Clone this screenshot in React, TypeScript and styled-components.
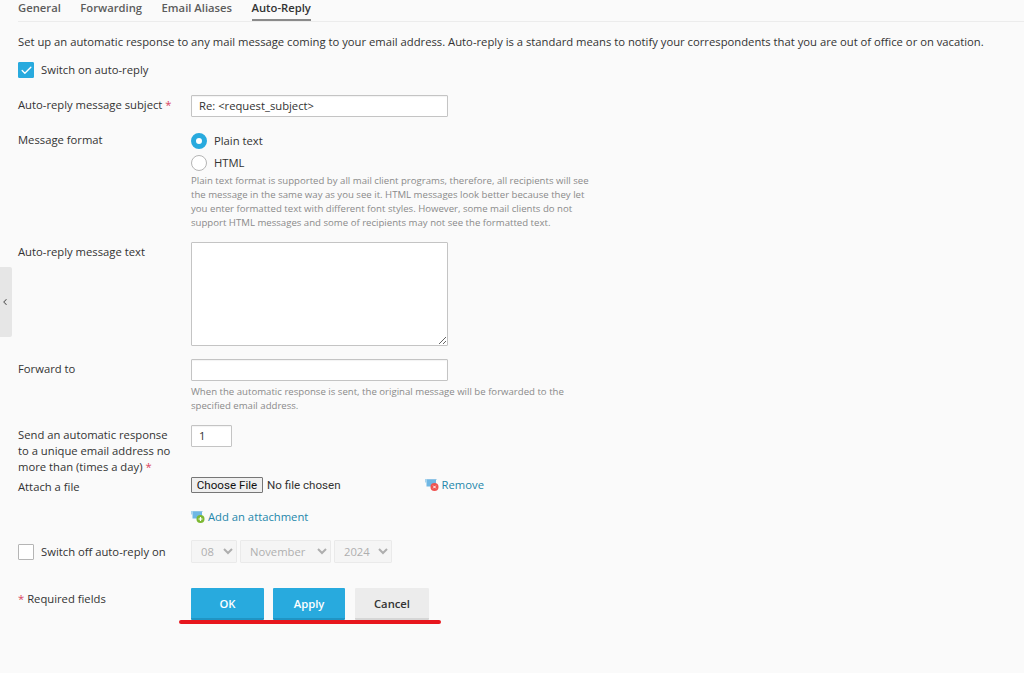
import styled, { createGlobalStyle } from 'styled-components';
import { Check, ChevronLeft } from 'lucide-react';

const GlobalStyle = createGlobalStyle`
  html, body {
    margin: 0;
    padding: 0;
    background: #fafafa;
  }
  body {
    font-family: "Open Sans", "Liberation Sans", sans-serif;
    font-size: 11.25px;
    color: #333;
  }
`

const Page = styled.div`
  position: relative;
  height: 673px;
  overflow: hidden;
  padding: 0 0 0 18px;
  box-sizing: border-box;
`
const Tabs = styled.div`
  display: flex;
  gap: 19.5px;
  height: 21px;
  border-bottom: 1px solid #ececec;
  box-sizing: content-box;
`
const Tab = styled.div<{ $active?: boolean }>`
  height: 21px;
  margin-bottom: -1px;
  line-height: 16px;
  font-weight: 600;
  color: ${p => (p.$active ? '#333' : '#5c5c5c')};
  border-bottom: ${p => (p.$active ? '2px solid #8a8a8a' : 'none')};
  box-sizing: border-box;
`
const Intro = styled.p`
  margin: 12px 0 0;
  line-height: 16px;
  white-space: nowrap;
`
const CheckRow = styled.label<{ $top?: number }>`
  display: flex;
  align-items: center;
  gap: 7px;
  margin-top: ${p => p.$top ?? 12}px;
  height: 16px;
`
const Caption = styled.span`
  margin-bottom: 2px;
`
const CheckBox = styled.span<{ $checked?: boolean }>`
  display: flex;
  align-items: center;
  justify-content: center;
  width: 16px;
  height: 16px;
  border-radius: 1px;
  box-sizing: border-box;
  background: ${p => (p.$checked ? '#28aade' : '#fff')};
  border: 1px solid ${p => (p.$checked ? '#28aade' : '#b5b5b5')};
  color: #fff;
`
const Row = styled.div<{ $top: number; $height: number }>`
  display: grid;
  grid-template-columns: 173px 1fr;
  margin-top: ${p => p.$top}px;
  height: ${p => p.$height}px;
`
const Label = styled.div<{ $offset?: number }>`
  margin-top: ${p => p.$offset ?? 2}px;
  line-height: 16px;
  width: 158px;
`
const Required = styled.span`
  color: #d9455f;
`
const TextInput = styled.input<{ $width: number }>`
  display: block;
  width: ${p => p.$width}px;
  height: 22px;
  margin: 0;
  padding: 0 7px 2px;
  box-sizing: border-box;
  font: inherit;
  color: #333;
  background: #fff;
  border: 1px solid #c4c4c4;
  border-radius: 1px;
  box-shadow: inset 0 1px 1px rgba(0, 0, 0, 0.05);
  outline: none;
`
const TextArea = styled.textarea`
  display: block;
  width: 257px;
  height: 104px;
  margin: 0;
  padding: 4px 7px;
  box-sizing: border-box;
  font: inherit;
  background: #fff;
  border: 1px solid #c4c4c4;
  border-radius: 1px;
`
const RadioRow = styled.div`
  display: flex;
  align-items: center;
  gap: 7px;
  height: 16px;
  margin-bottom: 6px;
`
const Radio = styled.span<{ $checked?: boolean }>`
  width: 16px;
  height: 16px;
  border-radius: 50%;
  box-sizing: border-box;
  background: #fff;
  border: ${p => (p.$checked ? '5px solid #28aade' : '1px solid #b5b5b5')};
`
const Help = styled.div<{ $top: number }>`
  margin-top: ${p => p.$top}px;
  width: 400px;
  font-size: 9.62px;
  line-height: 14px;
  color: #8a8a8a;
`
const FileRow = styled.div`
  display: flex;
  align-items: center;
  justify-content: space-between;
  height: 16px;
  width: 293px;
`
const FileInput = styled.input`
  width: 155px;
  font-family: "Roboto", "Liberation Sans", sans-serif;
  font-size: 11.6px;
  color: #333;
  &::file-selector-button {
    font: inherit;
    height: 16px;
    width: 72px;
    padding: 0;
    margin-right: 4px;
    border: 1px solid #767676;
    border-radius: 1px;
    background: #efefef;
    color: #111;
  }
`
const LinkRow = styled.div<{ $top?: number }>`
  display: flex;
  align-items: center;
  gap: 1px;
  margin-top: ${p => p.$top ?? 0}px;
  height: 16px;
  color: #2487ab;
`
const SelectGroup = styled.div`
  display: flex;
  gap: 3px;
`
const DateSelect = styled.select<{ $width: number }>`
  width: ${p => p.$width}px;
  height: 23px;
  margin: 0;
  padding: 0 0 0 5px;
  box-sizing: border-box;
  font: inherit;
  color: #8f8f8f;
  background: #f4f4f4;
  border: 1px solid #e4e4e4;
  border-radius: 1px;
`
const Buttons = styled.div`
  position: relative;
  display: flex;
  height: 32px;
`
const Action = styled.div<{ $primary?: boolean; $width: number; $gap: number }>`
  display: flex;
  align-items: center;
  justify-content: center;
  width: ${p => p.$width}px;
  margin-right: ${p => p.$gap}px;
  box-sizing: border-box;
  font-weight: 600;
  border-radius: 1px;
  color: ${p => (p.$primary ? '#fff' : '#333')};
  background: ${p => (p.$primary ? '#28aade' : '#ececec')};
  border-bottom: 2px solid ${p => (p.$primary ? '#1f94c4' : '#d6d6d6')};
`
const RedLine = styled.div`
  position: absolute;
  left: -12px;
  top: 32px;
  width: 262px;
  height: 4px;
  border-radius: 2px;
  background: #e7161d;
`
const SideHandle = styled.div`
  position: absolute;
  left: 0;
  top: 267px;
  width: 12px;
  height: 70px;
  display: flex;
  align-items: center;
  justify-content: flex-start;
  background: #e6e6e6;
  border-radius: 0 2px 2px 0;
  color: #555;
`

function AttachIcon({ plus }: { plus?: boolean }) {
  return (
    <svg width="16" height="14" viewBox="0 0 16 14">
      <path d="M0 1h11.5v1h-11.5z" fill="#8fc4e6" />
      <rect x="1.5" y="2" width="9.5" height="6.5" fill="#6fb7e4" />
      <rect x="0" y="1" width="2" height="3.5" fill="#a8d4ee" />
      <circle cx="9.5" cy="9" r="4" fill={plus ? '#7cb832' : '#ef5350'} />
      {plus ? (
        <path d="M7.5 9h4M9.5 7v4" stroke="#fff" strokeWidth="1.2" />
      ) : (
        <path d="M8.2 7.7l2.6 2.6M10.8 7.7l-2.6 2.6" stroke="#fff" strokeWidth="1" />
      )}
    </svg>
  )
}

function App() {
  return (
    <Page>
      <GlobalStyle />
      <SideHandle>
        <ChevronLeft size={10} strokeWidth={2.5} />
      </SideHandle>
      <Tabs>
        <Tab>General</Tab>
        <Tab>Forwarding</Tab>
        <Tab>Email Aliases</Tab>
        <Tab $active>Auto-Reply</Tab>
      </Tabs>
      <Intro>
        Set up an automatic response to any mail message coming to your email address. Auto-reply is a standard means to notify your correspondents that you are out of office or on vacation.
      </Intro>
      <CheckRow>
        <CheckBox $checked><Check size={13} strokeWidth={2.5} /></CheckBox>
        <Caption>Switch on auto-reply</Caption>
      </CheckRow>
      <Row $top={17} $height={22}>
        <Label>Auto-reply message subject <Required>*</Required></Label>
        <TextInput $width={257} defaultValue="Re: <request_subject>" />
      </Row>
      <Row $top={16} $height={103}>
        <Label $offset={-1}>Message format</Label>
        <div>
          <RadioRow><Radio $checked /><Caption>Plain text</Caption></RadioRow>
          <RadioRow><Radio /><Caption>HTML</Caption></RadioRow>
          <Help $top={-3}>
            Plain text format is supported by all mail client programs, therefore, all recipients will see the message in the same way as you see it. HTML messages look better because they let you enter formatted text with different font styles. However, some mail clients do not support HTML messages and some of recipients may not see the formatted text.
          </Help>
        </div>
      </Row>
      <Row $top={6} $height={104}>
        <Label>Auto-reply message text</Label>
        <TextArea />
      </Row>
      <Row $top={13} $height={53}>
        <Label>Forward to</Label>
        <div>
          <TextInput $width={257} />
          <Help $top={4}>
            When the automatic response is sent, the original message will be forwarded to the specified email address.
          </Help>
        </div>
      </Row>
      <Row $top={13} $height={52}>
        <Label>
          Send an automatic response to a unique email address no more than (times a day) <Required>*</Required>
        </Label>
        <TextInput $width={41} defaultValue="1" />
      </Row>
      <Row $top={0} $height={60}>
        <Label>Attach a file</Label>
        <div>
          <FileRow>
            <FileInput type="file" />
            <LinkRow><AttachIcon /><Caption>Remove</Caption></LinkRow>
          </FileRow>
          <LinkRow $top={16}><AttachIcon plus /><Caption>Add an attachment</Caption></LinkRow>
        </div>
      </Row>
      <Row $top={3} $height={23}>
        <CheckRow $top={4}>
          <CheckBox />
          <Caption>Switch off auto-reply on</Caption>
        </CheckRow>
        <SelectGroup>
          <DateSelect $width={46} disabled><option>08</option></DateSelect>
          <DateSelect $width={91} disabled><option>November</option></DateSelect>
          <DateSelect $width={58} disabled><option>2024</option></DateSelect>
        </SelectGroup>
      </Row>
      <Row $top={25} $height={32}>
        <Label $offset={3}><Required>*</Required> Required fields</Label>
        <Buttons>
          <Action $primary $width={73} $gap={9}>OK</Action>
          <Action $primary $width={72} $gap={10}>Apply</Action>
          <Action $width={74} $gap={0}>Cancel</Action>
          <RedLine />
        </Buttons>
      </Row>
    </Page>
  )
}

export default App;
